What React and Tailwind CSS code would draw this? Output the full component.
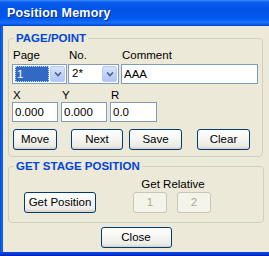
import React from 'react';

const font = { fontFamily: '"Liberation Sans", Arial, sans-serif' };

const btn =
  'h-[21px] flex items-center justify-center rounded-[3px] border border-[#003C74] bg-[linear-gradient(180deg,#FFFFFF_0%,#F7F7F4_40%,#ECEBE6_85%,#D6D0C5_100%)] text-[11.5px] text-black leading-none';

const btnOff =
  'h-[21px] flex items-center justify-center rounded-[3px] border border-[#C9C7BA] bg-[#F5F4EA] text-[11.5px] text-[#ACA899] leading-none';

const input =
  'h-[20px] border border-[#7F9DB9] bg-white text-[11.5px] text-black leading-[18px] pl-[2px]';

const Chevron = () => (
  <svg width="8" height="5" viewBox="0 0 8 5">
    <path d="M1 0.5 L4 3.5 L7 0.5" fill="none" stroke="#4D6185" strokeWidth="1.6" />
  </svg>
);

const Combo = ({ value, selected, width }) => (
  <div className={`${width} h-[20px] border border-[#7F9DB9] bg-white flex p-[1px]`}>
    <div className="flex-1 flex items-center pl-[1px] pr-[1px]">
      {selected ? (
        <div className="w-full h-[16px] bg-[#316AC5] text-white text-[11.5px] leading-[14px] pl-[1px] border border-dotted border-[#CEDAF0]">
          {value}
        </div>
      ) : (
        <span className="text-[11.5px] text-black pl-[1px]">{value}</span>
      )}
    </div>
    <div className="w-[15px] h-full rounded-[2px] border border-[#B9CBF3] bg-[linear-gradient(180deg,#D7E4FD_0%,#BED1FA_60%,#AFC5F6_100%)] flex items-center justify-center">
      <Chevron />
    </div>
  </div>
);

const Legend = ({ children }) => (
  <legend className="ml-[5px] px-[2px] text-[11.5px] font-bold text-[#0046D5] leading-[14px]">
    {children}
  </legend>
);

export default function App() {
  return (
    <div
      className="w-[269px] h-[256px] overflow-hidden flex flex-col bg-[#0831D9] select-none"
      style={font}
    >
      {/* title bar */}
      <div className="h-[26px] shrink-0 flex items-center pl-[7px] bg-[linear-gradient(180deg,#3C8DF8_0%,#0A5FF0_8%,#0053E6_35%,#0058EE_70%,#1B6FF8_88%,#0051E0_96%,#003CC8_100%)]">
        <span className="text-white font-bold text-[12.5px] tracking-[0.2px] [text-shadow:1px_1px_0_#0A2A8A]">
          Position Memory
        </span>
      </div>

      <div className="flex flex-1 min-h-0">
        {/* left frame */}
        <div className="w-[3px] bg-[linear-gradient(90deg,#0046D8_0%,#166AEE_60%,#0055E5_100%)]" />

        <div className="flex-1 bg-[#ECE9D8] flex flex-col">
          {/* PAGE/POINT */}
          <fieldset className="ml-[5px] mt-[5px] w-[255px] h-[126px] border border-[#D0D0BF] rounded-[4px]">
            <Legend>PAGE/POINT</Legend>
            <div className="pl-[3px] pt-[3px] flex flex-col">
              <div className="flex gap-[1px] h-[14px] text-[11.5px] text-black leading-[14px]">
                <span className="w-[55px] pl-[1px]">Page</span>
                <span className="w-[52px] pl-[1px]">No.</span>
                <span className="pl-[1px]">Comment</span>
              </div>
              <div className="flex mt-[2px]">
                <Combo value="1" selected width="w-[55px]" />
                <div className="w-[1px]" />
                <Combo value="2*" width="w-[51px]" />
                <div className="w-[2px]" />
                <div className={`${input} w-[137px]`}>AAA</div>
              </div>
              <div className="flex gap-[3px] mt-[4px] h-[14px] text-[11.5px] text-black leading-[14px]">
                <span className="w-[46px] pl-[1px]">X</span>
                <span className="w-[46px] pl-[1px]">Y</span>
                <span className="pl-[1px]">R</span>
              </div>
              <div className="flex gap-[3px] mt-[0px]">
                <div className={`${input} w-[46px]`}>0.000</div>
                <div className={`${input} w-[46px]`}>0.000</div>
                <div className={`${input} w-[47px]`}>0.0</div>
              </div>
              <div className="flex mt-[7px] pl-[1px]">
                <div className={`${btn} w-[44px]`}>Move</div>
                <div className={`${btn} w-[52px] ml-[14px]`}>Next</div>
                <div className={`${btn} w-[53px] ml-[6px]`}>Save</div>
                <div className={`${btn} w-[53px] ml-[15px]`}>Clear</div>
              </div>
            </div>
          </fieldset>

          {/* GET STAGE POSITION */}
          <fieldset className="ml-[5px] mt-[2px] w-[256px] h-[64px] border border-[#D0D0BF] rounded-[4px]">
            <Legend>GET STAGE POSITION</Legend>
            <div className="flex items-end pt-[4px]">
              <div className={`${btn} w-[72px] ml-[15px]`}>Get Position</div>
              <div className="ml-[37px] flex flex-col items-center">
                <span className="text-[11.5px] text-black leading-[14px] pl-[2px]">Get Relative</span>
                <div className="flex gap-[10px] mt-[1px]">
                  <div className={`${btnOff} w-[34px]`}>1</div>
                  <div className={`${btnOff} w-[34px]`}>2</div>
                </div>
              </div>
            </div>
          </fieldset>

          <div className="flex justify-center mt-[4px]">
            <div className={`${btn} w-[71px]`}>Close</div>
          </div>
        </div>
      </div>

      {/* bottom frame */}
      <div className="h-[4px] shrink-0 bg-[linear-gradient(180deg,#0A4FE0_0%,#0831D9_60%,#001EA0_100%)]" />
    </div>
  );
}
